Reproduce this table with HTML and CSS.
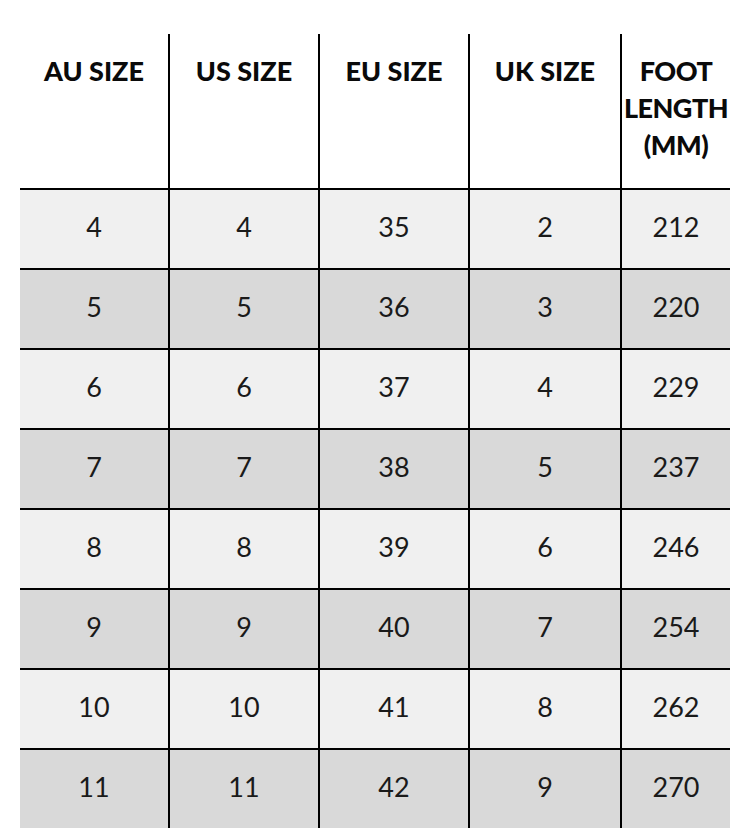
FILE: index.html
```html
<!DOCTYPE html>
<html>
<head>
<meta charset="utf-8">
<link rel="stylesheet" href="styles.css">
</head>
<body>
<table class="size-chart">
  <colgroup>
    <col class="c1"><col class="c2"><col class="c3"><col class="c4"><col class="c5">
  </colgroup>
  <thead>
    <tr>
      <th>AU SIZE</th>
      <th>US SIZE</th>
      <th>EU SIZE</th>
      <th>UK SIZE</th>
      <th class="narrow">FOOT LENGTH (MM)</th>
    </tr>
  </thead>
  <tbody>
    <tr class="light"><td>4</td><td>4</td><td>35</td><td>2</td><td>212</td></tr>
    <tr class="dark"><td>5</td><td>5</td><td>36</td><td>3</td><td>220</td></tr>
    <tr class="light"><td>6</td><td>6</td><td>37</td><td>4</td><td>229</td></tr>
    <tr class="dark"><td>7</td><td>7</td><td>38</td><td>5</td><td>237</td></tr>
    <tr class="light"><td>8</td><td>8</td><td>39</td><td>6</td><td>246</td></tr>
    <tr class="dark"><td>9</td><td>9</td><td>40</td><td>7</td><td>254</td></tr>
    <tr class="light"><td>10</td><td>10</td><td>41</td><td>8</td><td>262</td></tr>
    <tr class="dark"><td>11</td><td>11</td><td>42</td><td>9</td><td>270</td></tr>
  </tbody>
</table>
</body>
</html>
```
FILE: styles.css
```css
html, body {
  margin: 0;
  padding: 0;
  background: #fff;
}
body {
  padding: 34px 0 0 20px;
  font-family: "Lato", "Liberation Sans", sans-serif;
  color: #111;
}
.size-chart {
  border-collapse: separate;
  border-spacing: 0;
  table-layout: fixed;
  width: 710px;
}
.c1 { width: 148px; }
.c2 { width: 150px; }
.c3 { width: 150px; }
.c4 { width: 152px; }
.c5 { width: 110px; }
.size-chart th {
  height: 154px;
  box-sizing: border-box;
  padding: 18px 0 0 0;
  vertical-align: top;
  text-align: center;
  font-weight: 900;
  font-size: 27px;
  line-height: 37px;
  color: #0a0a0a;
  white-space: nowrap;
}
.size-chart th.narrow {
  white-space: normal;
  letter-spacing: -0.5px;
}
.size-chart th + th,
.size-chart td + td {
  border-left: 2px solid #000;
}
.size-chart td {
  height: 80px;
  box-sizing: border-box;
  border-top: 2px solid #000;
  padding: 0 0 5px 0;
  text-align: center;
  vertical-align: middle;
  font-size: 27px;
  font-weight: 400;
  color: #1a1a1a;
}
.size-chart tr.light td { background: #f0f0f0; }
.size-chart tr.dark td { background: #d9d9d9; }
```
